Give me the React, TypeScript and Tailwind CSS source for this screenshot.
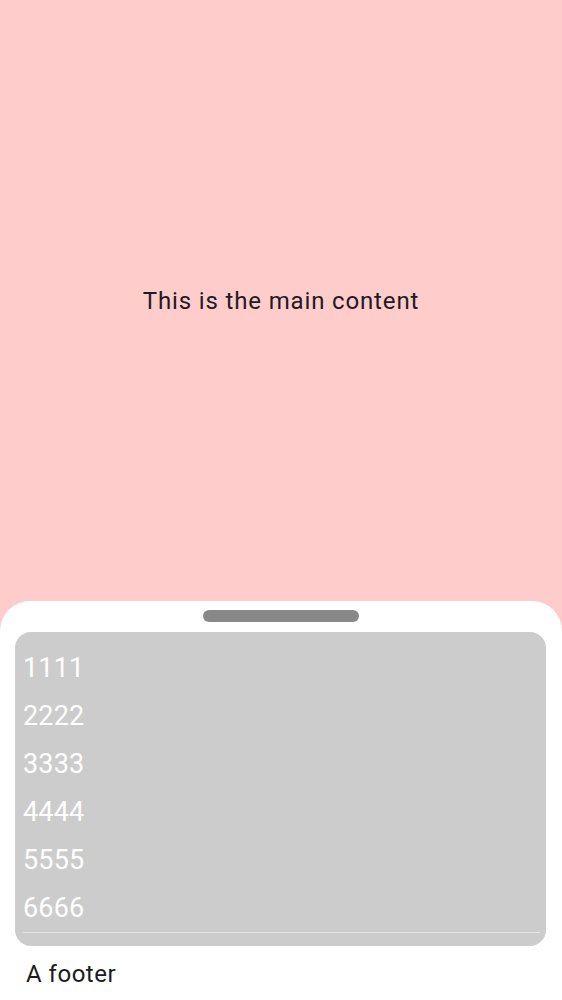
import React from "react";

const ITEMS = ["1111", "2222", "3333", "4444", "5555", "6666"];

export default function App() {
  return (
    <div
      className="flex h-[1000px] w-full flex-col bg-[#ffcccc]"
      style={{ fontFamily: "Roboto, 'Noto Sans', sans-serif" }}
    >
      {/* Main content */}
      <div className="flex flex-1 items-center justify-center">
        <p className="text-[24px] tracking-[0.85px] text-[#1d1b20]">This is the main content</p>
      </div>

      {/* Bottom sheet */}
      <div className="flex h-[399px] flex-col rounded-t-[30px] bg-white pt-[9px]">
        <div className="mx-auto h-3 w-[156px] rounded-full bg-[#888888]" />
        <div className="mt-[10px] ml-[15px] mr-4 rounded-2xl bg-[#cccccc] px-2 pt-3 pb-[13px]">
          {ITEMS.map((item) => (
            <div key={item} className="flex h-12 items-center text-[27px] tracking-[0.2px] text-white">
              {item}
            </div>
          ))}
          <div className="mr-[-2px] h-px bg-[#e4e4e4]" />
        </div>
        <p className="mt-[10px] pl-[26px] text-[24px] tracking-[0.5px] text-[#1d1b20]">A footer</p>
      </div>
    </div>
  );
}
